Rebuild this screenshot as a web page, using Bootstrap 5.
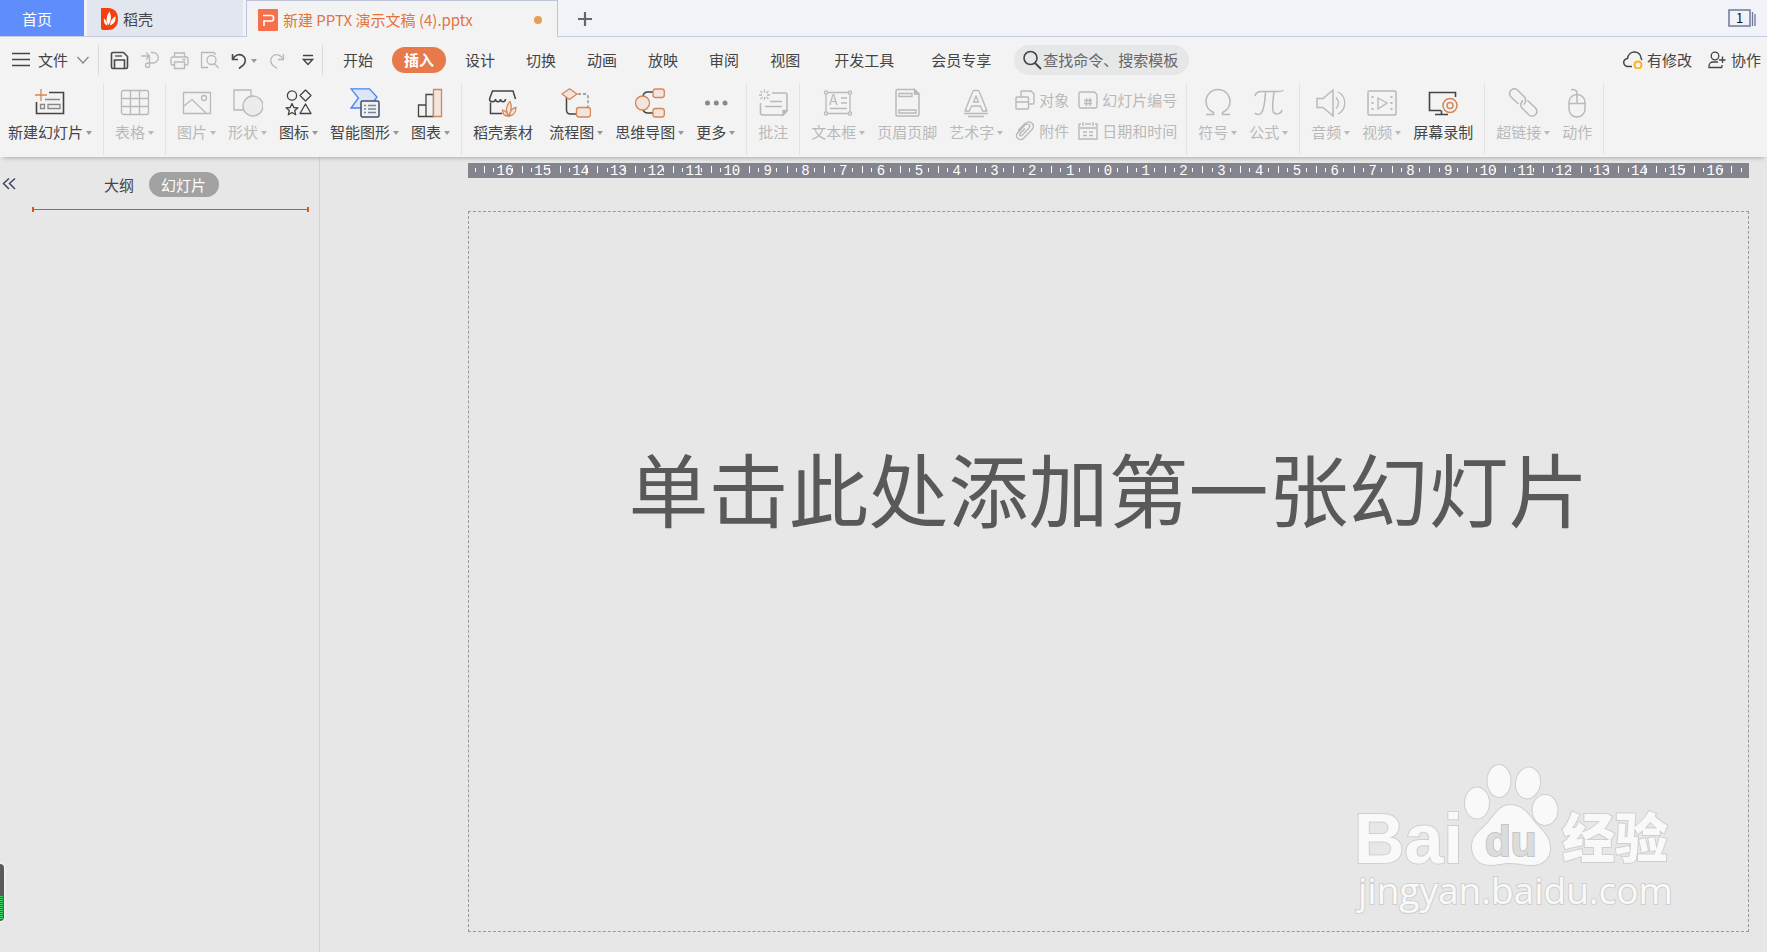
<!DOCTYPE html>
<html lang="zh-CN">
<head>
<meta charset="utf-8">
<meta name="viewport" content="width=device-width, initial-scale=1">
<title>新建 PPTX 演示文稿 (4).pptx</title>
<link href="https://cdn.jsdelivr.net/npm/bootstrap@5.3.0/dist/css/bootstrap.min.css" rel="stylesheet">
<style>
  body { font: 15px/20px "Noto Sans CJK SC", sans-serif; color: #444; background: #e7e7e7; }
  button { border: 0; padding: 0; background: none; color: inherit; white-space: nowrap; }
  button:disabled { color: #b9b9b9; }
  svg { display: block; fill: none; stroke: currentColor; stroke-width: 1.3; flex: none; }
  .solid { stroke: none; }

  /* document tabs */
  .tabstrip { height: 37px; background: #f2f3f8; border-bottom: 1px solid #c3cddf; }
  .doc-tab { height: 36px; padding-top: 2px; }
  .tab-home { width: 84px; background: #608dfc; color: #fff; padding-right: 10px; }
  .tab-store { width: 156px; margin-left: 3px; padding-left: 14px; gap: 4px; background: #e1e6ef; }
  .tab-file { width: 312px; height: 37px; margin-left: 3px; padding: 1px 15px 0 11px; gap: 5px; background: #f3f3f3; border: 1px solid #bcc5da; border-bottom: 0; color: #e2733f; }
  .tab-new { margin-left: 17px; color: #666; }
  .unsaved { width: 8px; height: 8px; background: #e59e58; }
  .win-count { margin-right: 11px; color: #6f7896; }

  /* menu row */
  .menurow { height: 46px; padding: 0 6px 0 12px; background: #f3f3f3; }
  .vline { width: 1px; height: 30px; background: #dadada; }
  .menu-tabs { gap: 7px; margin-left: 8px; }
  .menu-tabs button { height: 26px; padding: 0 12px; border-radius: 13px; }
  .menu-tabs .wide { padding: 0 15px; }
  .menu-tabs .active { background: #e7794a; color: #fff; font-weight: 700; }
  .finder { width: 175px; height: 30px; margin-left: 8px; padding: 0 9px; gap: 1px; border-radius: 15px; background: #e6e7e8; }
  .finder input { width: 144px; border: 0; padding: 0; background: none; outline: 0; color: #666; }
  .finder input::placeholder { color: #666; opacity: 1; }
  .quick { margin-left: 11px; color: #4a4a4a; }
  .dim { color: #b9b9b9; }

  /* ribbon */
  .ribbon { height: 74px; padding-left: 2px; background: #f3f3f3; box-shadow: 0 4px 4px -3px #aaa; position: relative; z-index: 1; }
  .tool-set { padding: 5px 5px 0 6px; box-shadow: 1px 0 #e2e2e2; height: 72px; }
  .tool-set:first-child { padding-left: 0; }
  .tool { padding: 0 6px; flex: none; align-self: flex-start; }
  .tool svg { margin: 0 auto 4px; }
  .drop::after { content: ""; display: inline-block; margin-left: 3px; vertical-align: 3px; border: 3px solid transparent; border-top: 4px solid #999; border-bottom: 0; }
  :disabled .drop::after { border-top-color: #b9b9b9; }
  .mini-grid { display: grid; grid-template-columns: auto auto; column-gap: 9px; row-gap: 11px; padding: 2px 4px 0 6px; align-content: start; }
  .mini-grid button { display: flex; gap: 4px; }
  .o { stroke: #d68655; }
  .of { stroke: #d68655; fill: #f3e4dd; }
  .g { stroke: #888; }
  .soft { fill: #ececec; }

  /* side panel */
  .side { width: 320px; border-right: 1px solid #d2d2d2; padding-top: 15px; }
  .fold { margin: 0 87px 0 2px; color: #40485e; }
  .chip { height: 25px; padding: 0 13px 0 12px; margin-left: 15px; border-radius: 13px; background: #a2a2a2; color: #fff; }
  .insert-mark { margin: 10px 10px 0 32px; height: 5px; border: solid #d25a14; border-width: 0 2px; background: linear-gradient(#d25a14, #d25a14) center / 100% 1px no-repeat; }

  /* editing area */
  .stage { padding: 6px 18px 20px 148px; }
  .scale { height: 15px; padding: 0 17px 0 16px; background: linear-gradient(#fff, #fff) 7px 5px / 1px 4px no-repeat, linear-gradient(#fff, #fff) calc(100% - 7px) 5px / 1px 4px no-repeat, #84848e; }
  .scale span { flex: 1 1 0; text-align: center; font: 14px/17px "Liberation Mono", monospace; color: #fff;
    background: linear-gradient(#fff, #fff) 0 3px / 1px 7px no-repeat, linear-gradient(#fff, #fff) 25% 5px / 1px 4px no-repeat, linear-gradient(#fff, #fff) 75% 5px / 1px 4px no-repeat; }
  .scale .two-digit { text-indent: 4px; }
  .scale span:last-child { background: linear-gradient(#fff, #fff) 0 3px / 1px 7px no-repeat, linear-gradient(#fff, #fff) 25% 5px / 1px 4px no-repeat, linear-gradient(#fff, #fff) 75% 5px / 1px 4px no-repeat, linear-gradient(#fff, #fff) 100% 3px / 1px 7px no-repeat; }
  .sheet { margin-top: 33px; border: 1px dashed #999; padding-top: 218px; }
  .sheet button { font-size: 80px; line-height: 112px; color: #595959; }
  .stamp { right: 68px; bottom: 10px; fill: #f9f9f9; stroke: #cfcfcf; stroke-width: 2; paint-order: stroke; }
  .meter { left: 0; bottom: 31px; width: 4px; height: 57px; border-radius: 0 4px 4px 0; background: repeating-linear-gradient(#3fce6a 0 1px, #5a5a5a 1px 2px) 0 32px / 3px 23px no-repeat, #5a5a5a; box-shadow: 0 0 2px 1px #f5f5f5; }
</style>
</head>
<body class="min-vh-100 d-flex flex-column overflow-hidden">

<header>
  <nav class="tabstrip d-flex align-items-start">
    <button class="doc-tab tab-home">首页</button>
    <button class="doc-tab tab-store d-flex align-items-center">
      <svg class="solid" width="18" height="22" viewBox="0 0 18 22"><path fill="#f73f0d" d="M0 0h7c7 0 10 5 10 11s-3 11-10 11H2a2 2 0 0 1-2-2z"/><path fill="#fff" d="M7.500 17C4.500 12 5.500 8 8.500 3.500c2 5 2 9-1 13.500zM9 17.500c.5-5 2.500-7.500 5.500-9 .5 4.500-1.500 7.500-5.500 9zM6.500 17.500c-3-1-4-4-3.500-7 2.500 2 3.500 4 3.500 7z"/></svg>
      稻壳
    </button>
    <button class="doc-tab tab-file d-flex align-items-center">
      <svg class="solid" width="20" height="22" viewBox="0 0 20 22"><rect width="20" height="22" rx="1" fill="#f7704b"/><path d="M5 6.500h8.500a2 2 0 0 1 2 2v1.500a2 2 0 0 1-2 2H6V17" stroke="#fff" stroke-width="1.600"/></svg>
      <span>新建 PPTX 演示文稿 (4).pptx</span>
      <span class="unsaved rounded-circle ms-auto"></span>
    </button>
    <button class="doc-tab tab-new" aria-label="新建标签"><svg width="20" height="20" viewBox="0 0 20 20"><path stroke-width="2.200" d="M10 3v14M3 10h14"/></svg></button>
    <button class="doc-tab win-count ms-auto" aria-label="窗口">
      <svg width="28" height="20" viewBox="0 0 28 20"><rect x="1" y="1" width="21" height="16" stroke-width="1.500"/><path d="M24.500 3v14M27 5v12"/><text x="8" y="14" font-size="13" fill="#111" stroke="none">1</text></svg>
    </button>
  </nav>

  <div class="menurow d-flex align-items-center">
    <button class="d-flex align-items-center">
      <svg class="me-2" width="18" height="16" viewBox="0 0 18 16"><path d="M0 1.500h18M0 7.500h18M0 13.500h18" stroke-width="1.500"/></svg>文件
      <svg class="ms-2 g" width="14" height="10" viewBox="0 0 14 10"><path d="M1.500 2 7 8l5.500-6"/></svg>
    </button>
    <span class="vline ms-2"></span>
    <button class="quick" aria-label="保存"><svg width="19" height="19" viewBox="0 0 19 19"><path stroke-width="1.600" d="M3 1.500h10.500l4 4V16a1.500 1.500 0 0 1-1.500 1.500H3A1.500 1.500 0 0 1 1.500 16V3A1.500 1.500 0 0 1 3 1.500zM4.500 17V9h10v8"/><path d="M5 5h7"/></svg></button>
    <button class="quick dim" aria-label="输出"><svg width="19" height="19" viewBox="0 0 19 19"><path d="M1 5h9M6 1.500 9.500 5 6 8.500M11 1.500h2a4.500 4.500 0 0 1 0 10.500H8.500M9.500 6v8.500a2 2 0 1 1-4 0c0-1.500 1-2.500 3-2.500"/></svg></button>
    <button class="quick dim" aria-label="打印"><svg width="19" height="19" viewBox="0 0 19 19"><path d="M4.500 6V2h10v4M4.500 14h-2A1.500 1.500 0 0 1 1 12.500v-5A1.500 1.500 0 0 1 2.500 6h14A1.500 1.500 0 0 1 18 7.500v5a1.500 1.500 0 0 1-1.500 1.500h-2M4.500 11h10v6.500h-10zM12.500 8.500h3"/></svg></button>
    <button class="quick dim" aria-label="预览"><svg width="19" height="19" viewBox="0 0 19 19"><path d="M15 4V2.500A1 1 0 0 0 14 1.500H1.500v15H8"/><circle cx="11.500" cy="9" r="4.500"/><path d="m14.500 12.500 4 4.500"/></svg></button>
    <button class="quick d-flex align-items-center" aria-label="撤销"><svg width="18" height="19" viewBox="0 0 18 19"><path stroke-width="1.600" d="M2.500 3v5.500H8M2.500 8.500C5 4 9 2.500 12.500 4.500c3.500 2 3.500 7 1 9.500L9 17.500"/></svg><span class="drop"></span></button>
    <button class="quick dim" aria-label="重做"><svg width="18" height="19" viewBox="0 0 18 19"><path d="M15.500 3v5.500H10M15.500 8.500C13 4 9 2.500 5.500 4.500c-3.500 2-3.500 7-1 9.500L9 17.500"/></svg></button>
    <button class="ms-3 me-2" aria-label="更多命令"><svg width="12" height="12" viewBox="0 0 12 12"><path stroke-width="1.400" d="M1 1.500h10M1.500 5.500h9L6 10.500z"/></svg></button>
    <span class="vline"></span>
    <nav class="menu-tabs d-flex">
      <button>开始</button><button class="active">插入</button><button>设计</button><button>切换</button><button>动画</button><button>放映</button><button>审阅</button><button>视图</button><button class="wide">开发工具</button><button class="wide">会员专享</button>
    </nav>
    <label class="finder d-flex align-items-center">
      <svg width="19" height="20" viewBox="0 0 19 20"><circle cx="7.500" cy="8" r="6.500" stroke-width="1.600"/><path stroke-width="1.800" d="m12 13 6 6"/></svg>
      <input type="text" placeholder="查找命令、搜索模板" aria-label="查找命令、搜索模板">
    </label>
    <button class="ms-auto d-flex align-items-center gap-1">
      <svg width="20" height="18" viewBox="0 0 20 18"><path stroke-width="1.500" d="M9 15.500H5A4 4 0 0 1 4.500 7.500C5 3.500 8 1 11.500 1s6.500 2.500 6.500 6l1 2"/><circle cx="15" cy="14" r="3.500" stroke="#fdaf21" stroke-width="2"/></svg>有修改
    </button>
    <button class="d-flex align-items-center ms-3">
      <svg class="me-1" width="19" height="18" viewBox="0 0 19 18"><circle cx="7" cy="5" r="3.800"/><path d="M10 11H5a4 4 0 0 0-4 4v1.500h13M11 9h6.500M14.500 5.500v6.500M14 16.500V14"/></svg>协作
    </button>
  </div>

  <div class="ribbon d-flex">
    <div class="tool-set d-flex">
      <button class="tool"><svg width="30" height="30" viewBox="0 0 30 30"><path class="o" d="M6 1v12M0 7h12"/><path stroke-width="1.600" d="M14 4.500h14.500v21h-27V14"/><path class="g" d="M10 11.500h15M5.500 16.500h4v4h-4zM13 16.500h12v4H13z"/></svg><span class="drop">新建幻灯片</span></button>
    </div>
    <div class="tool-set d-flex">
      <button class="tool" disabled><svg width="30" height="30" viewBox="0 0 30 30"><rect x="1.500" y="2.500" width="27" height="24" rx="2"/><path d="M2 10.500h26M2 18.500h26M10.500 3v23M19.500 3v23"/></svg><span class="drop">表格</span></button>
    </div>
    <div class="tool-set d-flex">
      <button class="tool" disabled><svg width="30" height="30" viewBox="0 0 30 30"><path d="M1.500 4.500h27v21h-27zM2 18l8-6.500L24 25"/><circle cx="22" cy="10" r="2.500"/></svg><span class="drop">图片</span></button>
      <button class="tool" disabled><svg width="30" height="30" viewBox="0 0 30 30"><path d="M1 2h17v20H1z"/><circle class="soft" cx="20" cy="18" r="10"/></svg><span class="drop">形状</span></button>
      <button class="tool"><svg width="30" height="30" viewBox="0 0 30 30" stroke-linejoin="round"><circle cx="8" cy="7.500" r="4.600"/><path d="m21.500 2 5.500 5.500-5.500 5.500L16 7.500zM21.500 16l5.500 9.500H16zM8 15.500l1.800 4 4.200.3-3.300 2.700 1 4.300L8 24.500l-3.700 2.300 1-4.300L2 19.800l4.200-.3z"/></svg><span class="drop">图标</span></button>
      <button class="tool"><svg width="30" height="30" viewBox="0 0 30 30"><path stroke="#4685f5" fill="#dce6f6" d="M1 .8h18.500L27 9l-8 11H1l7.500-10z"/><rect x="11" y="13" width="18" height="16" rx="1.500" stroke="#424d68" stroke-width="1.500" fill="#eef0f4"/><path stroke="#7c8395" d="M14 17.500h2M18 17.500h8M14 21h2M18 21h8M14 24.500h2M18 24.500h8"/></svg><span class="drop">智能图形</span></button>
      <button class="tool"><svg width="30" height="30" viewBox="0 0 30 30"><path d="M2.500 17h7.500v11.500H2.500zM10 6.500h7.500v22H10z"/><path class="of" d="M17.500 1.500h8v27h-8z"/></svg><span class="drop">图表</span></button>
    </div>
    <div class="tool-set d-flex">
      <button class="tool me-1"><svg width="30" height="30" viewBox="0 0 30 30"><path stroke-width="1.500" d="M1.500 11 4.500 3H25l2.500 8M1.500 11c0 3.500 6 3.500 6 0 0 3.500 5 3.500 5 0 0 3.500 5 3.500 5 0M2.500 14.500v11H14"/><path class="of" d="M21 28c-4-4-3-11 1-14.500 2 4 1 10-1 14.500zM21.500 28c0-5 3-8 6.500-8.500 0 5-3 8-6.500 8.500zM20 28c-4 0-5.500-2.500-5.500-6 3 1 5 3 5.500 6z"/></svg>稻壳素材</button>
      <button class="tool"><svg width="30" height="30" viewBox="0 0 30 30"><path stroke-width="1.500" d="M5.500 9v13q0 4 4 4H16"/><path class="g" stroke-dasharray="3 2" d="M17 6h7q3 0 3 3v10"/><path class="of" d="M8.500.8 16 6 8.500 11.500 1 6z"/><rect class="of" x="15.500" y="19.500" width="14" height="9.500" rx="2.500"/></svg><span class="drop">流程图</span></button>
      <button class="tool"><svg width="30" height="30" viewBox="0 0 30 30"><path stroke-width="1.500" d="M8 9q0-5 5-5h5M8 20q0 5 5 5h5"/><circle class="of" cx="7.500" cy="15" r="7"/><rect class="of" x="18" y="1" width="11.300" height="8.500" rx="2.500"/><rect class="of" x="18" y="20.500" width="11.300" height="8.500" rx="2.500"/></svg><span class="drop">思维导图</span></button>
      <button class="tool"><svg width="30" height="30" viewBox="0 0 30 30"><g fill="#888" stroke="none"><circle cx="6.500" cy="15" r="2.500"/><circle cx="15.300" cy="15" r="2.500"/><circle cx="24" cy="15" r="2.500"/></g></svg><span class="drop">更多</span></button>
    </div>
    <div class="tool-set d-flex">
      <button class="tool" disabled><svg width="30" height="30" viewBox="0 0 30 30"><path d="M6.500 1.500v3M6.500 9v3M1 7h3M9 7h3M2.500 3l2 2M8.500 9l2 2M10.500 3l-2 2M4.500 9l-2 2"/><path stroke-width="1.600" d="M14 5h13q2 0 2 2v16l-4 4H4.500q-2 0-2-2V15"/><path d="M12 13.500h12M7 18.500h17"/><path fill="currentColor" d="M29 22.500 25 27v-4.500z"/></svg>批注</button>
    </div>
    <div class="tool-set d-flex">
      <button class="tool" disabled><svg width="30" height="30" viewBox="0 0 30 30"><path d="M3 4.500h24v21H3z"/><g fill="#f3f3f3"><circle cx="3" cy="4.500" r="1.600"/><circle cx="27" cy="4.500" r="1.600"/><circle cx="3" cy="25.500" r="1.600"/><circle cx="27" cy="25.500" r="1.600"/></g><path d="M18 10h6M18 15h6M7 20.500h17"/><text x="6" y="17" font-size="14" fill="currentColor" stroke="none">A</text></svg><span class="drop">文本框</span></button>
      <button class="tool" disabled><svg width="30" height="30" viewBox="0 0 30 30"><path stroke-width="1.500" d="M5.500 1.500h17L27 6v20.500q0 1.500-1.500 1.500h-20Q4 28 4 26.500V3q0-1.500 1.500-1.500z"/><path d="M7 5.500h13v3H7zM7 22h17v3H7z"/><path fill="currentColor" d="M22.500 1.500 27 6h-4.500z"/></svg>页眉页脚</button>
      <button class="tool" disabled><svg width="30" height="30" viewBox="0 0 30 30"><path stroke-linejoin="round" d="M13 2.500h4q1 0 1.500 1.500L26 23h-4.500l-2-5h-9l-2 5H4L11.500 4q.5-1.500 1.500-1.500zM12.500 14h5L15 8z"/><path d="M3 25.500h24M7 28.500h16"/></svg><span class="drop">艺术字</span></button>
      <div class="mini-grid">
        <button disabled><svg width="20" height="20" viewBox="0 0 20 20"><path stroke-width="1.400" d="M6 7V2q0-1 1-1h9l3 3v9q0 1-1 1h-4M2 7h10.500q1 0 1 1v10q0 1-1 1H2q-1 0-1-1V8q0-1 1-1zM1 12h12"/></svg>对象</button>
        <button disabled><svg width="20" height="20" viewBox="0 0 20 20"><path stroke-width="1.400" d="M2.500 2h14L19 4.500V16q0 2-2 2H3q-2 0-2-2V3.500Q1 2 2.500 2z"/><path d="M8.500 8v8M12 8v8M6 10.500h8M6 13.500h8"/></svg>幻灯片编号</button>
        <button disabled><svg width="20" height="20" viewBox="0 0 20 20"><path stroke-width="1.400" d="m3 9.500 7-7c5-4 11 1 7 6l-8 8.500c-4 4-10-1-6.500-5l7.500-8c3-2 6 0 4 3l-7 7.500c-1.500 1-3-.5-2-2l5-5"/></svg>附件</button>
        <button disabled><svg width="20" height="20" viewBox="0 0 20 20"><path stroke-width="1.400" d="M1 3h2M7 3h6M17 3h2v15H1V3M5 1v4M15 1v4"/><path d="M2 7h16M5 11h4M11 11h4M5 14.500h4M11 14.500h4"/></svg>日期和时间</button>
      </div>
    </div>
    <div class="tool-set d-flex">
      <button class="tool" disabled><svg width="30" height="30" viewBox="0 0 30 30"><path stroke-width="1.500" d="M3 26.500h7.500v-2C5 22 3 18 3 13.500a12 12 0 0 1 24 0c0 4.500-2 8.500-7.500 11v2H27"/></svg><span class="drop">符号</span></button>
      <button class="tool" disabled><svg width="30" height="30" viewBox="0 0 30 30"><path stroke-width="1.500" d="M1 8c1-4 3-4.500 6-4.500h17c2 0 4 0 5.500-1M11.500 4C11 14 10 22 7 25.500c-2 1.500-5 1-6-.5M20 4c-1 8-2 14-1 19 1 4 8 4 9-1"/></svg><span class="drop">公式</span></button>
    </div>
    <div class="tool-set d-flex">
      <button class="tool" disabled><svg width="30" height="30" viewBox="0 0 30 30"><path stroke-width="1.500" d="M1 10.500h6L17 2v26L7 19.500H1z"/><path d="M20 9.500q5 5.500 0 11M22 4c9 4.500 9 17.500 0 22"/></svg><span class="drop">音频</span></button>
      <button class="tool" disabled><svg width="30" height="30" viewBox="0 0 30 30"><rect x="1" y="3" width="28" height="24" rx="1.500" stroke-width="1.500"/><path d="m11 10 9 5-9 6z"/><path stroke-width="2" stroke-dasharray="2 4" d="M5.500 8v15M24.500 8v15"/></svg><span class="drop">视频</span></button>
      <button class="tool"><svg width="30" height="30" viewBox="0 0 30 30"><path stroke-width="1.600" d="M13 22.500H1.500V4.500h26V9M13.500 22.500V26M7 26.500h13"/><g class="o" stroke-width="1.500"><circle cx="22" cy="17.500" r="7" fill="#f3f3f3"/><circle cx="22" cy="17.500" r="3"/></g></svg>屏幕录制</button>
    </div>
    <div class="tool-set d-flex">
      <button class="tool" disabled><svg width="30" height="30" viewBox="0 0 30 30"><g stroke-width="1.500"><path d="M10.500 16 3 9C-1 4 5-1.500 9.500 2l7 7c2 2.500 1.500 6-1 7.500"/><path d="m19.500 12.500 8 7.500c4 5-2 10.500-6.500 7l-7-7c-2-2.500-1.500-6 1-7.500"/></g></svg><span class="drop">超链接</span></button>
      <button class="tool" disabled><svg width="30" height="30" viewBox="0 0 30 30"><rect x="7" y="6.500" width="16" height="22.500" rx="8" stroke-width="1.500"/><path stroke-width="1.500" d="M7 15.500h16M15 15V5c0-3-3-4-6-3"/></svg>动作</button>
    </div>
  </div>
</header>

<main class="d-flex flex-grow-1">
  <aside class="side flex-shrink-0">
    <div class="d-flex align-items-center">
      <button class="fold" aria-label="收起"><svg width="15" height="14" viewBox="0 0 15 14"><path stroke-width="1.500" d="M7 .5 1.500 5.500 7 11M13 .5 7.500 5.500 13 11"/></svg></button>
      <button>大纲</button>
      <button class="chip">幻灯片</button>
    </div>
    <div class="insert-mark"></div>
  </aside>
  <section class="stage flex-grow-1 d-flex flex-column">
    <div class="scale d-flex" id="scale"></div>
    <div class="sheet flex-grow-1 position-relative text-center">
      <button>单击此处添加第一张幻灯片</button>
      <svg class="stamp position-absolute" width="340" height="170" viewBox="0 0 340 170">
        <text x="14" y="112" font-family="Liberation Sans, sans-serif" font-weight="700" font-size="70">Bai</text>
        <ellipse cx="137" cy="52" rx="12" ry="15.500"/><ellipse cx="159" cy="30" rx="11.500" ry="16"/><ellipse cx="188" cy="32" rx="12" ry="15.500" transform="rotate(10 188 32)"/><ellipse cx="205" cy="59" rx="12.500" ry="15"/>
        <path d="M170 54c15 0 20 13 28 21 8 8 12 13 12 23s-8 16-18 16c-8 0-14-2-22-2s-12 2-20 2c-12 0-18-9-18-18 0-10 6-15 12-20 8-7 14-22 26-22z"/>
        <text x="145" y="105" font-family="Liberation Sans, sans-serif" font-weight="700" font-size="42" fill="#dcdcdc" stroke="#c6c6c6">du</text>
        <text x="222" y="107" font-family="Noto Sans CJK SC, sans-serif" font-weight="900" font-size="53">经验</text>
        <text x="18" y="153" font-family="Open Sans, sans-serif" font-size="37">jingyan.baidu.com</text>
      </svg>
    </div>
  </section>
</main>
<div class="meter position-absolute"></div>

<script src="https://cdn.jsdelivr.net/npm/bootstrap@5.3.0/dist/js/bootstrap.bundle.min.js"></script>
<script>
  // centimetre ruler, counted outwards from the middle of the slide
  const scale = document.getElementById('scale');
  for (let cm = -16; cm <= 16; cm++) {
    const cell = document.createElement('span');
    const value = Math.abs(cm);
    cell.textContent = value;
    if (value > 9) cell.className = 'two-digit';
    scale.append(cell);
  }
</script>
</body>
</html>
